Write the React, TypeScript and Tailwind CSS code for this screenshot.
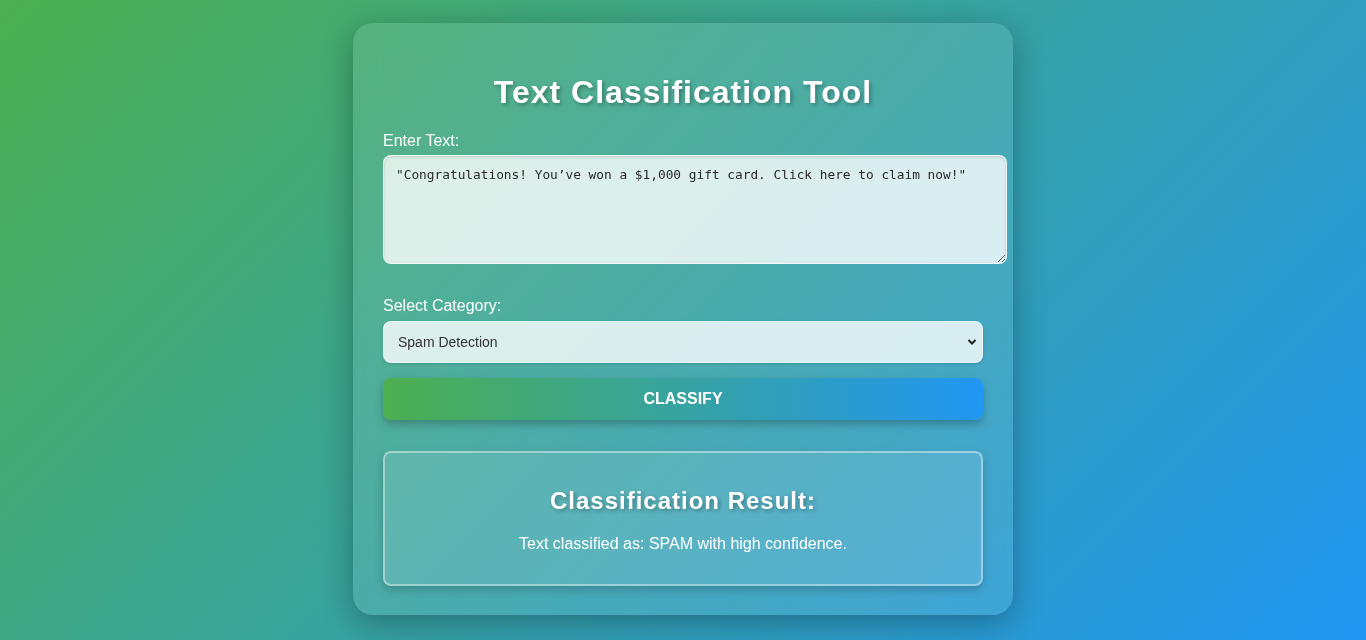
import React from "react";

export default function App() {
  return (
    <div
      className="w-full h-[640px] overflow-hidden bg-[linear-gradient(135deg,#4caf50,#2196f3)] flex justify-center pt-[23px]"
      style={{ fontFamily: '"Liberation Sans", Arial, sans-serif' }}
    >
      <div className="w-[660px] h-[592px] rounded-[20px] bg-white/10 shadow-[0_8px_32px_rgba(0,0,0,0.3)] backdrop-blur-md p-[30px] text-white">
        <h1 className="text-[32px] leading-[37px] font-bold text-center tracking-[1px] mt-[21px] mb-[21px] [text-shadow:2px_2px_4px_rgba(0,0,0,0.3)]">
          Text Classification Tool
        </h1>
        <label className="block text-[16px] leading-[18px] mb-[5px]">Enter Text:</label>
        <textarea
          className="block w-[624px] h-[109px] rounded-[8px] border border-white/60 bg-white/80 text-[#2a2a2a] px-[12px] py-[10px] text-[12.8px] leading-[18px] shadow-[inset_0_1px_3px_rgba(0,0,0,0.15)] resize-y outline-none"
          style={{ fontFamily: '"DejaVu Sans Mono", monospace' }}
          defaultValue={'"Congratulations! You\u2019ve won a $1,000 gift card. Click here to claim now!"'}
        />
        <label className="block text-[16px] leading-[18px] mt-[33px] mb-[6px]">Select Category:</label>
        <div className="relative w-[600px] h-[42px]">
          <select
            className="appearance-none w-full h-full rounded-[8px] border border-white/60 bg-white/80 text-[#333] pl-[14px] text-[14px] shadow-[0_1px_3px_rgba(0,0,0,0.15)] outline-none"
            style={{ fontFamily: '"Liberation Sans", Arial, sans-serif' }}
            defaultValue="spam"
          >
            <option value="spam">Spam Detection</option>
          </select>
          <svg
            className="absolute right-[6px] top-[17px] pointer-events-none"
            width="10"
            height="8"
            viewBox="0 0 10 8"
          >
            <path d="M1.5 2 L5 5.5 L8.5 2" stroke="#222" strokeWidth="2" fill="none" />
          </svg>
        </div>
        <button className="mt-[15px] w-[600px] h-[42px] rounded-[8px] bg-[linear-gradient(90deg,#4caf50,#2196f3)] text-white font-bold text-[16px] uppercase shadow-[0_4px_8px_rgba(0,0,0,0.25)]">
          Classify
        </button>
        <div className="mt-[31px] w-[600px] h-[135px] rounded-[8px] border-2 border-white/40 bg-white/10 shadow-[0_4px_10px_rgba(0,0,0,0.2)] flex flex-col items-center pt-[34px]">
          <h2 className="text-[24px] leading-[28px] font-bold tracking-[1px] [text-shadow:2px_2px_4px_rgba(0,0,0,0.3)]">
            Classification Result:
          </h2>
          <p className="mt-[20px] text-[16px] leading-[18px]">Text classified as: SPAM with high confidence.</p>
        </div>
      </div>
    </div>
  );
}
